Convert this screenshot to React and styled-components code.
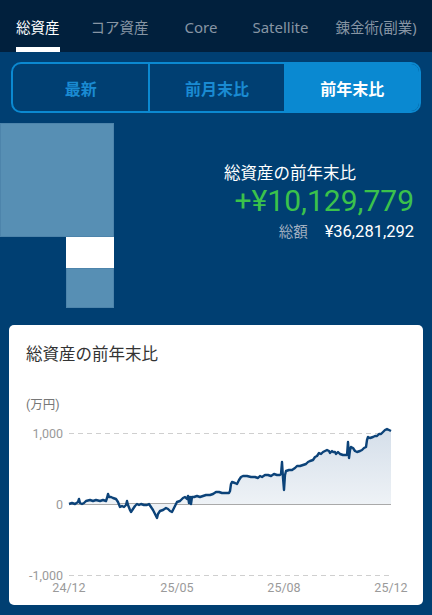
import React from 'react';
import styled, { createGlobalStyle } from 'styled-components';

const GlobalStyle = createGlobalStyle`
    body {
        margin: 0;
        background: #003f72;
        font-family: Roboto, "Noto Sans", "Noto Sans CJK JP", sans-serif;
    }
`;

const Screen = styled.div`
    width: 432px;
    height: 615px;
    overflow: hidden;
    background: #003f72;
`;

const TabBar = styled.nav`
    height: 52px;
    background: #01203d;
    display: flex;
    padding-left: 16px;
    font-family: "Noto Sans", "Noto Sans CJK JP", sans-serif;
`;

const Tab = styled.div`
    box-sizing: border-box;
    height: 52px;
    margin-left: ${({ offset }) => offset}px;
    padding-top: 16px;
    font-size: ${({ latin }) => (latin ? 15 : 14.5)}px;
    line-height: 22px;
    white-space: nowrap;
    color: ${({ active }) => (active ? '#ffffff' : '#8795a4')};
    border-bottom: 5px solid ${({ active }) => (active ? '#ffffff' : 'transparent')};
`;

const Segmented = styled.div`
    margin: 10px 11px 0;
    height: 51px;
    box-sizing: border-box;
    border: 2px solid #0b89d1;
    border-radius: 10px;
    overflow: hidden;
    display: grid;
    grid-template-columns: 1fr 1fr 1fr;
`;

const Segment = styled.div`
    display: flex;
    align-items: center;
    justify-content: center;
    font-family: "Noto Sans CJK JP", sans-serif;
    font-size: 16px;
    font-weight: 700;
    color: ${({ active }) => (active ? '#ffffff' : '#1a8bd2')};
    background: ${({ active }) => (active ? '#0a89d1' : 'transparent')};
    & + & {
        border-left: 2px solid #0b89d1;
    }
`;

const Summary = styled.section`
    margin-top: 10px;
    height: 185px;
    display: flex;
`;

const Treemap = styled.div`
    width: 114px;
    display: flex;
    flex-direction: column;
`;

const Tile = styled.div`
    box-sizing: border-box;
    width: ${({ w }) => w}px;
    height: ${({ h }) => h}px;
    background: ${({ white }) => (white ? '#ffffff' : '#578fb4')};
    border: ${({ white }) => (white ? 'none' : '1px solid #4d84ab')};
`;

const TileColumn = styled.div`
    align-self: flex-end;
    display: flex;
    flex-direction: column;
`;

const Figures = styled.div`
    flex: 1;
    padding: 38px 18px 0 0;
    text-align: right;
    color: #ffffff;
`;

const FigureLabel = styled.div`
    font-family: "Noto Sans CJK JP", sans-serif;
    font-size: 16.5px;
    line-height: 22px;
    padding-right: 58px;
`;

const Amount = styled.div`
    font-size: 30px;
    line-height: 36px;
    color: #3bc24b;
`;

const TotalRow = styled.div`
    font-size: 16.5px;
    line-height: 24px;
    display: flex;
    justify-content: flex-end;
    align-items: baseline;
    gap: 17px;
`;

const TotalLabel = styled.span`
    font-family: "Noto Sans CJK JP", sans-serif;
    font-size: 14.5px;
    color: #a2b0c1;
`;

const Card = styled.section`
    margin: 17px 9px 0;
    height: 280px;
    background: #ffffff;
    border-radius: 5px;
    overflow: hidden;
`;

const CardTitle = styled.h2`
    margin: 0;
    padding: 16px 0 0 17px;
    font-family: "Noto Sans CJK JP", sans-serif;
    font-weight: 400;
    font-size: 16.5px;
    line-height: 24px;
    color: #333333;
`;

const ChartSvg = styled.svg`
    display: block;
    margin-top: 15px;
    font-family: Roboto, "Noto Sans CJK JP", sans-serif;
`;

const points = [
    [69,504],[72,503],[75,504],[78,502],[79,499],[80,503],[82,504],[84,503],[86,501],[90,500],
    [93,501],[96,500],[100,501],[103,500],[106,501],[107,498],[108,494],[109,497],[111,497],[113,498],
    [116,499],[118,502],[120,507],[122,506],[124,507],[126,505],[127,501],[128,505],[130,510],[131,512],
    [133,509],[135,506],[137,504],[139,505],[141,504],[144,505],[147,505],[149,504],[151,507],[153,510],
    [155,514],[157,518],[158,514],[160,511],[163,510],[166,508],[168,509],[170,511],[172,512],[174,508],
    [176,504],[177,502],[180,501],[183,498],[185,497],[187,499],[188,496],[189,503],[190,497],[191,504],
    [192,497],[194,497],[197,496],[200,497],[203,496],[206,495],[210,495],[213,494],[216,492],[219,492],
    [222,493],[226,493],[229,493],[230,491],[231,484],[232,482],[235,483],[237,484],[239,480],[241,477],
    [243,476],[247,476],[251,477],[255,477],[258,478],[260,476],[262,477],[265,475],[268,475],[271,476],
    [274,474],[277,475],[280,475],[281,474],[282,462],[283,478],[284,490],[285,475],[286,471],[289,470],
    [292,470],[295,468],[297,466],[300,466],[303,465],[306,464],[308,462],[310,461],[313,460],[315,457],
    [317,456],[319,453],[321,454],[323,452],[325,451],[327,450],[329,451],[330,453],[332,451],[333,452],
    [335,452],[336,454],[338,452],[340,454],[343,455],[345,455],[347,455],[348,442],[349,458],[350,450],
    [351,447],[353,448],[355,451],[357,452],[360,451],[362,450],[364,448],[366,447],[367,440],[368,437],
    [370,438],[373,437],[375,436],[377,436],[379,434],[381,434],[383,432],[385,430],[387,429],[389,430],
    [391,431],
];

const linePath = points.map(([x, y], i) => `${i ? 'L' : 'M'}${x},${y}`).join(' ');
const areaPath = `${linePath} L391,504 L69,504 Z`;

const yTicks = [
    { label: '1,000', y: 433.5, dashed: true },
    { label: '0', y: 504, dashed: false },
    { label: '-1,000', y: 575.5, dashed: true },
];

const xTicks = [
    { label: '24/12', x: 69 },
    { label: '25/05', x: 177 },
    { label: '25/08', x: 284 },
    { label: '25/12', x: 391 },
];

const tabs = [
    { label: '総資産', offset: 0 },
    { label: 'コア資産', offset: 31 },
    { label: 'Core', offset: 36, latin: true },
    { label: 'Satellite', offset: 35, latin: true },
    { label: '錬金術(副業)', offset: 27 },
];
const modes = ['最新', '前月末比', '前年末比'];

const Chart = () => (
    <ChartSvg width="414" height="225" viewBox="9 380 414 225">
        <defs>
            <linearGradient id="area" x1="0" y1="430" x2="0" y2="504" gradientUnits="userSpaceOnUse">
                <stop offset="0" stopColor="#d5dfea" />
                <stop offset="1" stopColor="#eef2f6" />
            </linearGradient>
        </defs>
        <text x="26" y="409" fontSize="12.5" fill="#777">(万円)</text>
        {yTicks.map(t => (
            <g key={t.label}>
                <line
                    x1="69" x2="391" y1={t.y} y2={t.y}
                    stroke={t.dashed ? '#cfcfcf' : '#8c8c8c'}
                    strokeWidth={t.dashed ? 1.2 : 1.4}
                    strokeDasharray={t.dashed ? '5 4' : undefined}
                />
                <text x="63" y={t.y + 4.5} fontSize="12.5" fill="#9a9a9a" textAnchor="end">{t.label}</text>
            </g>
        ))}
        <path d={areaPath} fill="url(#area)" />
        <path d={linePath} fill="none" stroke="#0c4379" strokeWidth="2.4" strokeLinejoin="round" />
        {xTicks.map(t => (
            <text key={t.label} x={t.x} y="592" fontSize="12.5" fill="#9a9a9a" textAnchor="middle">{t.label}</text>
        ))}
    </ChartSvg>
);

export default function App() {
    return (
        <Screen>
            <GlobalStyle />
            <TabBar>
                {tabs.map((t, i) => (
                    <Tab key={t.label} active={i === 0} offset={t.offset} latin={t.latin}>{t.label}</Tab>
                ))}
            </TabBar>
            <Segmented>
                {modes.map((m, i) => <Segment key={m} active={i === 2}>{m}</Segment>)}
            </Segmented>
            <Summary>
                <Treemap>
                    <Tile w={114} h={114} />
                    <TileColumn>
                        <Tile white w={48} h={31} />
                        <Tile w={48} h={40} />
                    </TileColumn>
                </Treemap>
                <Figures>
                    <FigureLabel>総資産の前年末比</FigureLabel>
                    <Amount>+¥10,129,779</Amount>
                    <TotalRow>
                        <TotalLabel>総額</TotalLabel>
                        <span>¥36,281,292</span>
                    </TotalRow>
                </Figures>
            </Summary>
            <Card>
                <CardTitle>総資産の前年末比</CardTitle>
                <Chart />
            </Card>
        </Screen>
    );
}
